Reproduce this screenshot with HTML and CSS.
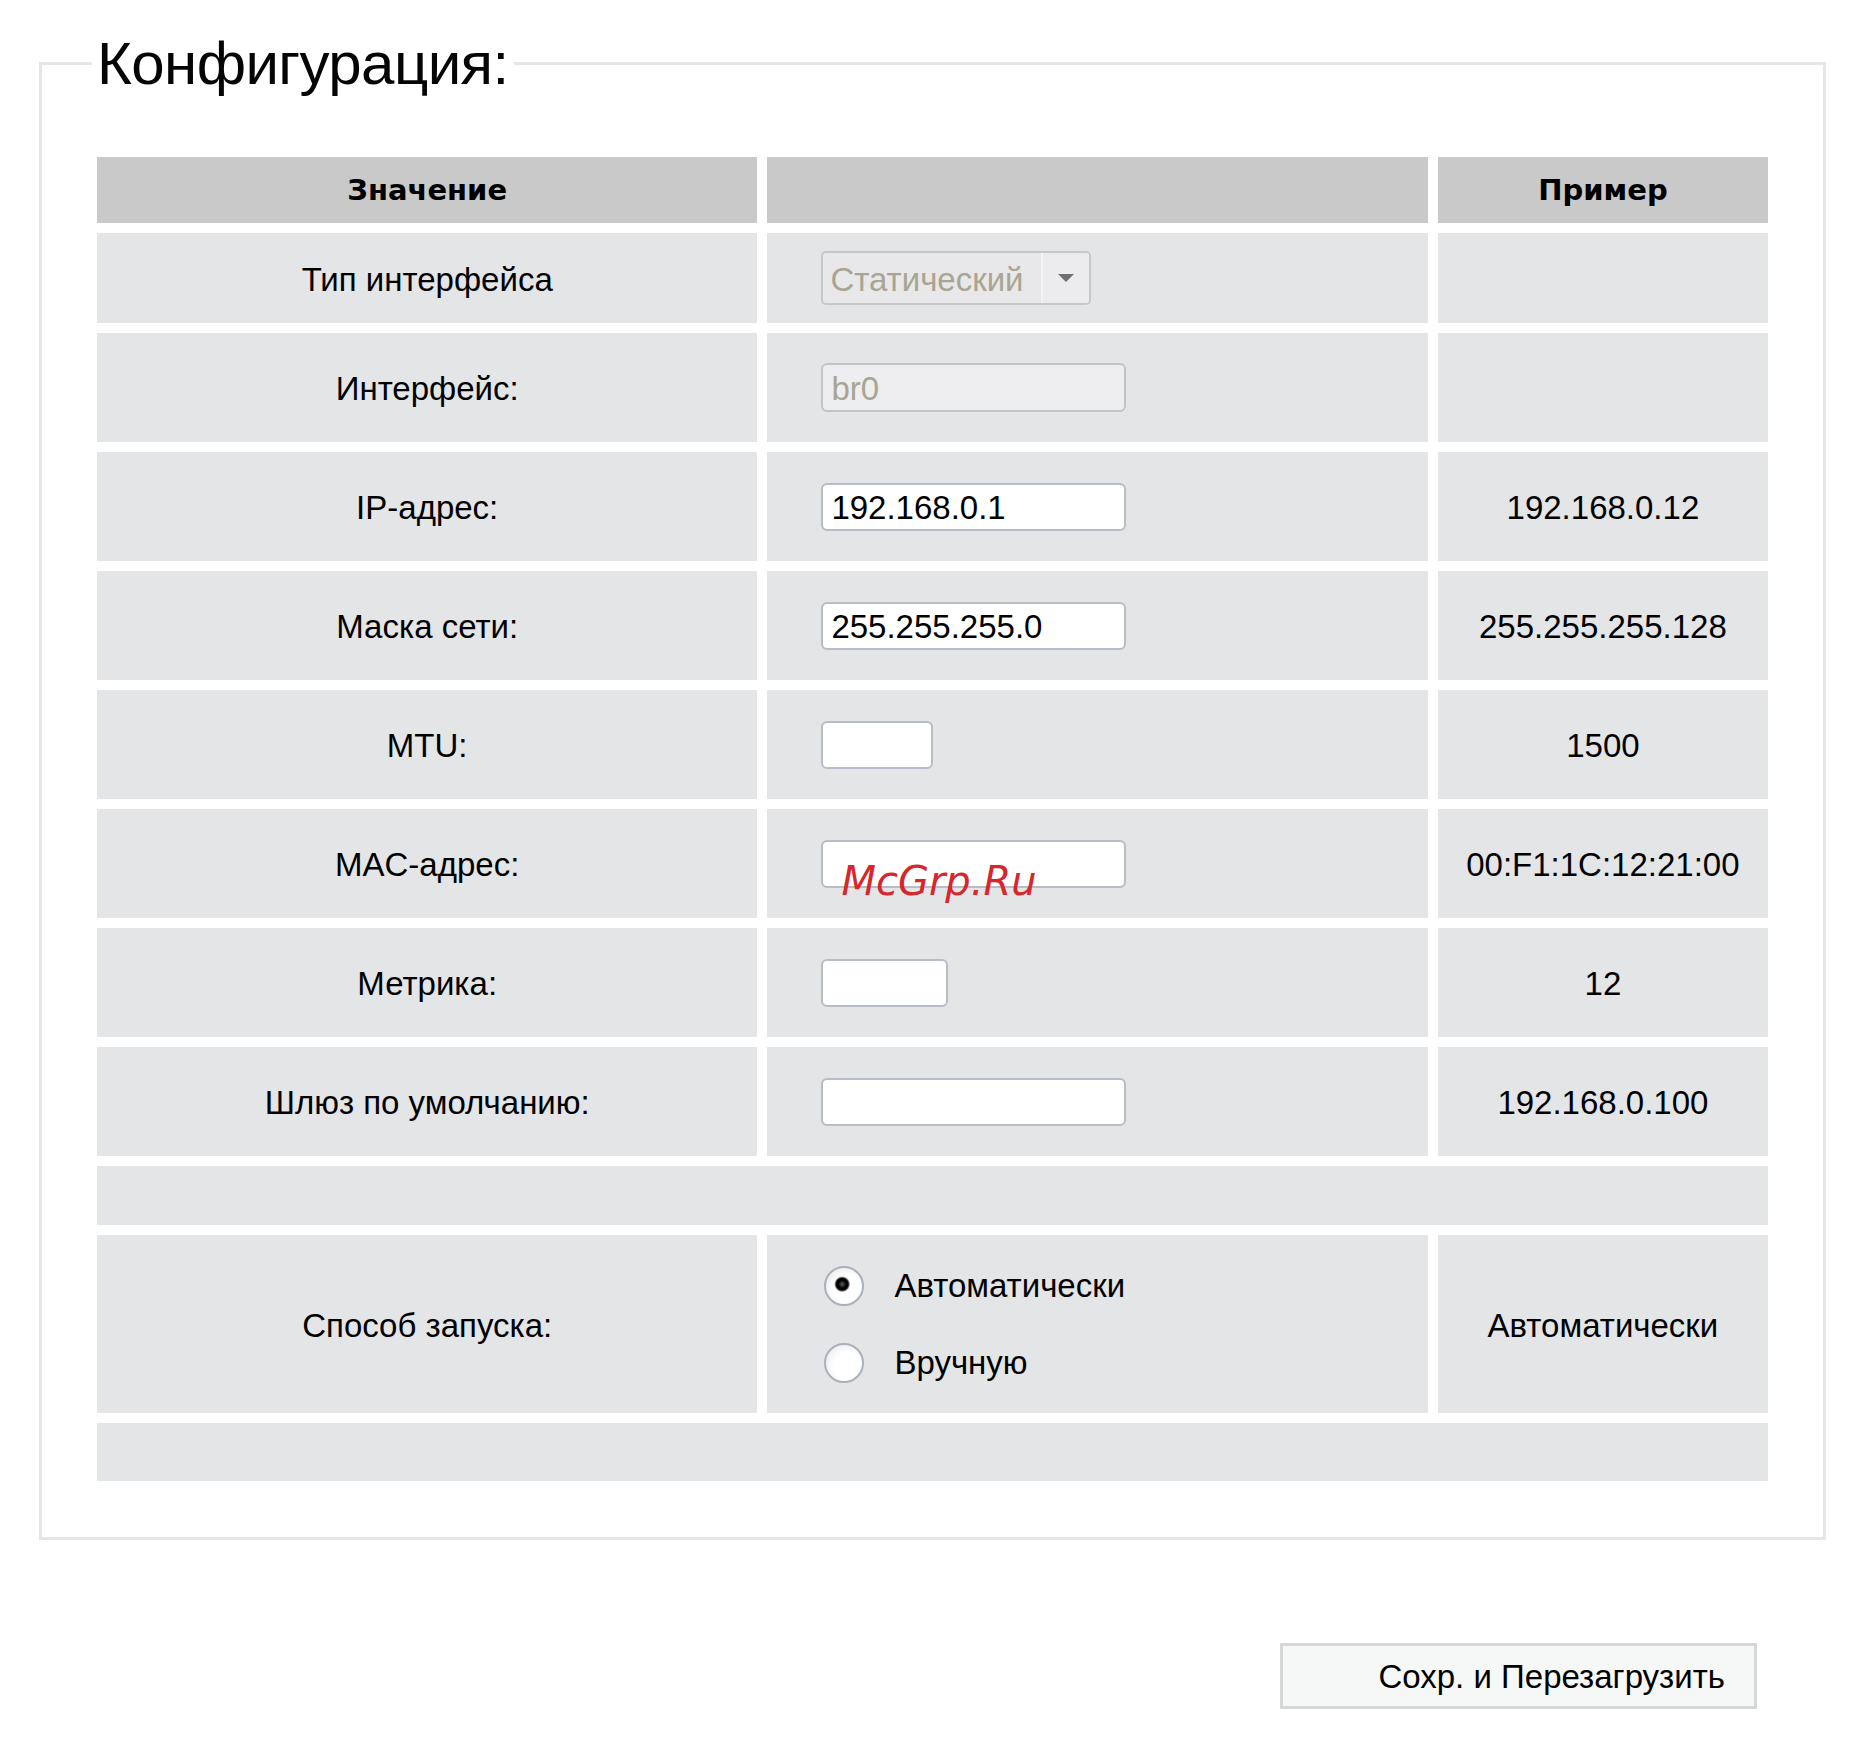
FILE: index.html
```html
<!DOCTYPE html>
<html lang="ru">
<head>
<meta charset="utf-8">
<title>Конфигурация</title>
<link rel="stylesheet" href="styles.css">
</head>
<body>
<div class="page">
  <fieldset class="config">
    <legend class="config-title">Конфигурация:</legend>
    <div class="grid">
      <div class="cell head">Значение</div>
      <div class="cell head"></div>
      <div class="cell head">Пример</div>

      <div class="cell label">Тип интерфейса</div>
      <div class="cell value">
        <div class="select">
          <span class="select-text">Статический</span>
          <span class="select-arrow"><svg width="18" height="10" viewBox="0 0 18 10"><path d="M1 1 L17 1 L9 9 Z" fill="#6e6f72"/></svg></span>
        </div>
      </div>
      <div class="cell example"></div>

      <div class="cell label">Интерфейс:</div>
      <div class="cell value"><input class="field field-disabled" type="text" value="br0" disabled></div>
      <div class="cell example"></div>

      <div class="cell label">IP-адрес:</div>
      <div class="cell value"><input class="field" type="text" value="192.168.0.1"></div>
      <div class="cell example">192.168.0.12</div>

      <div class="cell label">Маска сети:</div>
      <div class="cell value"><input class="field" type="text" value="255.255.255.0"></div>
      <div class="cell example">255.255.255.128</div>

      <div class="cell label">MTU:</div>
      <div class="cell value"><input class="field field-sm" type="text" value=""></div>
      <div class="cell example">1500</div>

      <div class="cell label">MAC-адрес:</div>
      <div class="cell value value-mark">
        <input class="field" type="text" value="">
        <span class="watermark">McGrp.Ru</span>
      </div>
      <div class="cell example">00:F1:1C:12:21:00</div>

      <div class="cell label">Метрика:</div>
      <div class="cell value"><input class="field field-md" type="text" value=""></div>
      <div class="cell example">12</div>

      <div class="cell label">Шлюз по умолчанию:</div>
      <div class="cell value"><input class="field" type="text" value=""></div>
      <div class="cell example">192.168.0.100</div>

      <div class="cell full"></div>

      <div class="cell label">Способ запуска:</div>
      <div class="cell value">
        <div class="radio-group">
          <label class="radio"><input class="radio-input" type="radio" name="start" checked>Автоматически</label>
          <label class="radio"><input class="radio-input" type="radio" name="start">Вручную</label>
        </div>
      </div>
      <div class="cell example">Автоматически</div>

      <div class="cell full"></div>
    </div>
  </fieldset>
  <div class="actions">
    <button class="btn" type="button">Сохр. и Перезагрузить</button>
  </div>
</div>
</body>
</html>
```

FILE: styles.css
```css
html, body {
  margin: 0;
  padding: 0;
  background: #ffffff;
}

body {
  font-family: "Liberation Sans", Arial, sans-serif;
  color: #000;
}

.page {
  padding: 29px 0 40px 39px;
}

.config {
  margin: 0;
  width: 1671px;
  min-width: 0;
  padding: 59px 55px 56px;
  border: 3px solid #e6e6e6;
}

.config-title {
  padding: 0 5px;
  margin-left: -5px;
  font-size: 60px;
  line-height: 69px;
  letter-spacing: -0.6px;
  font-weight: normal;
  color: #050505;
}

.grid {
  display: grid;
  grid-template-columns: 2fr 2fr 1fr;
  grid-template-rows: 66px 90px repeat(7, 109px) 59px 178px 58px;
  gap: 10px;
}

.cell {
  background: #e4e5e7;
  display: flex;
  align-items: center;
  justify-content: center;
  font-size: 33px;
  white-space: nowrap;
}

.label,
.example {
  padding-top: 3px;
}

.head {
  background: #c9c9c9;
  font-family: "DejaVu Sans", sans-serif;
  font-weight: bold;
  font-size: 29px;
}

.value {
  justify-content: flex-start;
  padding-left: 54px;
}

.full {
  grid-column: 1 / -1;
}

.value-mark {
  position: relative;
}

.watermark {
  position: absolute;
  left: 74px;
  top: 52px;
  font-family: "DejaVu Sans", sans-serif;
  font-style: italic;
  font-size: 40px;
  line-height: 40px;
  color: #d8262c;
  pointer-events: none;
}

.field {
  box-sizing: border-box;
  width: 305px;
  height: 48px;
  margin: 0;
  padding: 3px 0 0 8px;
  border: 2px solid #b7bdc6;
  border-radius: 6px;
  background: #ffffff;
  font-family: "Liberation Sans", Arial, sans-serif;
  font-size: 33px;
  color: #000;
  outline: none;
}

.field-sm {
  width: 112px;
}

.field-md {
  width: 127px;
}

.field-disabled,
.field:disabled {
  height: 49px;
  background: #eeeef0;
  border-color: #c0c3ca;
  color: #a8a592;
  -webkit-text-fill-color: #a8a592;
  opacity: 1;
}

.select {
  display: flex;
  box-sizing: border-box;
  width: 270px;
  height: 54px;
  border: 2px solid #c4c7ce;
  border-radius: 5px;
  background: #e8e8ea;
  overflow: hidden;
}

.select-text {
  flex: 1;
  display: flex;
  align-items: center;
  padding: 3px 0 0 7px;
  color: #a8a592;
}

.select-arrow {
  width: 46px;
  display: flex;
  align-items: center;
  justify-content: center;
  border-left: 2px solid #f3f3f5;
  background: #ececee;
}

.radio-group {
  display: flex;
  flex-direction: column;
  gap: 37px;
  padding-left: 3px;
}

.radio {
  display: flex;
  align-items: center;
  gap: 30px;
  height: 40px;
  font-size: 33px;
}

.radio-input {
  -webkit-appearance: none;
  appearance: none;
  box-sizing: border-box;
  width: 40px;
  height: 40px;
  margin: 0;
  border: 2px solid #aab1ba;
  border-radius: 50%;
  background: radial-gradient(circle at 60% 60%, #ffffff 45%, #e1e3e6 100%);
  outline: none;
}

.radio-input:checked {
  background:
    radial-gradient(circle at 45% 45%, #5a5a5a 0, #000 4px, #0a0a0a 6px, rgba(0,0,0,0) 8px),
    radial-gradient(circle at 60% 60%, #ffffff 45%, #e1e3e6 100%);
}

.actions {
  box-sizing: border-box;
  width: 1787px;
  margin-top: 103px;
  padding-right: 69px;
  display: flex;
  justify-content: flex-end;
}

.btn {
  box-sizing: border-box;
  width: 477px;
  height: 66px;
  margin: 0;
  padding: 2px 29px 0 0;
  border: 3px solid #d5d8d8;
  background: #f6f7f7;
  font-family: "Liberation Sans", Arial, sans-serif;
  font-size: 33px;
  color: #000;
  text-align: right;
}
```
